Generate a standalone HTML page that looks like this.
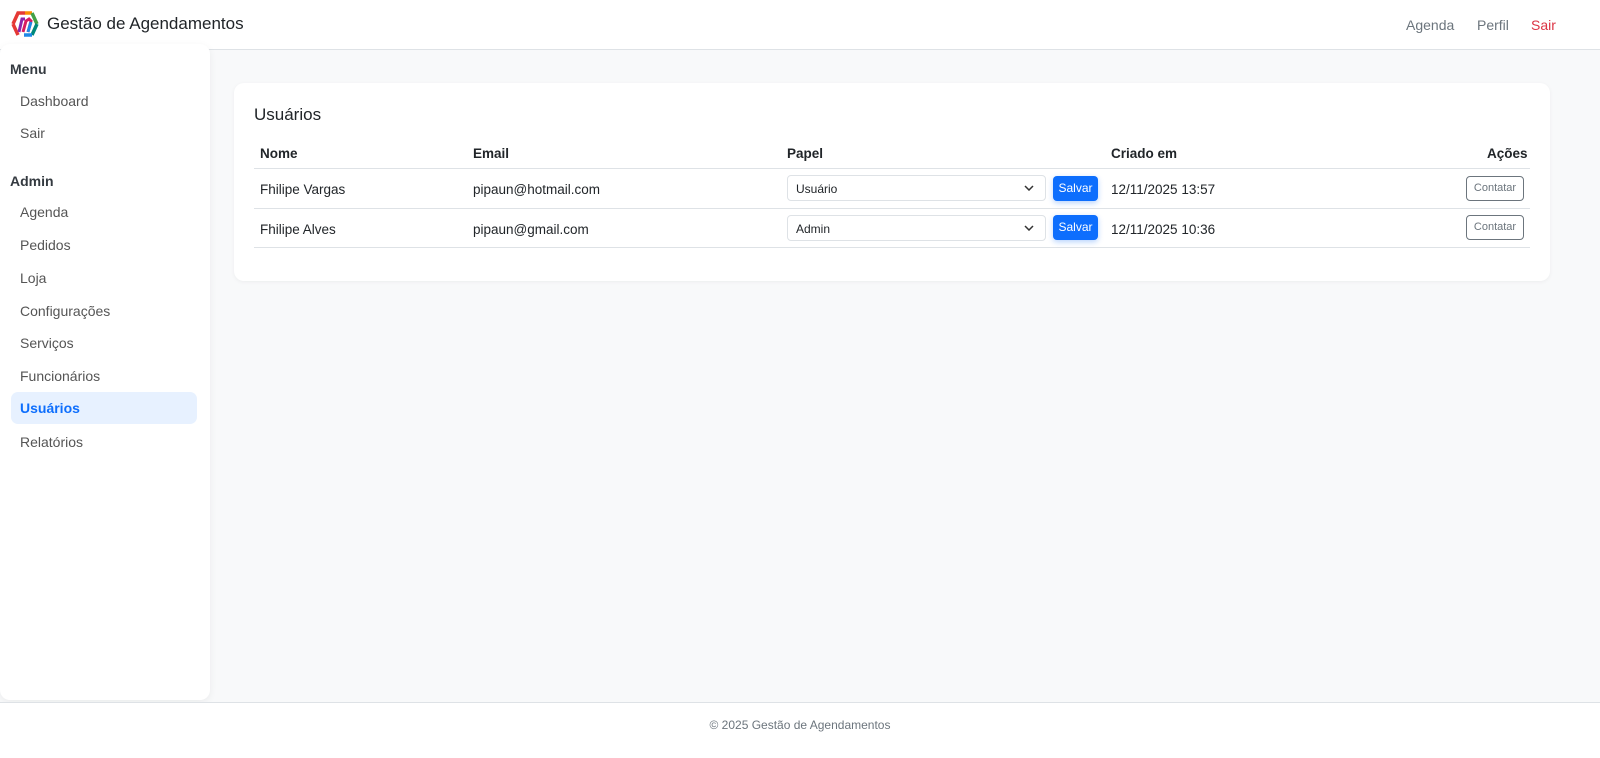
<!DOCTYPE html>
<html><head><meta charset="utf-8"><style>
*{box-sizing:border-box;margin:0;padding:0}
body{width:1600px;height:758px;background:#f8f9fa;font-family:"Liberation Sans",sans-serif;color:#212529;position:relative;overflow:hidden}
.nav{position:absolute;left:0;top:0;width:1600px;height:50px;background:#fff;border-bottom:1px solid #dee2e6}
.brand{position:absolute;left:47px;top:14px;font-size:17px;color:#212529}
.logo{position:absolute;left:10px;top:8px}
.nl{position:absolute;top:17px;font-size:14px;color:#6c757d}
.side{position:absolute;left:0;top:44px;width:210px;height:656px;background:#fff;border-radius:10px;box-shadow:0 2px 8px rgba(0,0,0,.06)}
.side h6{position:absolute;left:10px;font-size:14px;font-weight:bold;color:#343a40}
.side a{position:absolute;left:11px;width:186px;height:32px;padding:8px 9px;font-size:14px;color:#555;border-radius:7px}
.side a.act{background:#e7f1ff;color:#0d6efd;font-weight:bold}
.card{position:absolute;left:234px;top:83px;width:1316px;height:198px;background:#fff;border-radius:10px;box-shadow:0 1px 4px rgba(0,0,0,.05)}
.card h5{position:absolute;left:20px;top:22px;font-size:17px;font-weight:normal}
.th{position:absolute;top:63px;font-size:13.5px;font-weight:bold}
.line{position:absolute;left:20px;width:1276px;height:1px;background:#dee2e6}
.td{position:absolute;font-size:13.5px}
.sel{position:absolute;left:553px;width:259px;height:26px;border:1px solid #dee2e6;border-radius:4px;font-size:12px;padding:6px 8px}
.sel svg{position:absolute;right:11px;top:9px}
.btn{position:absolute;left:819px;width:45px;height:25px;background:#0d6efd;color:#fff;font-size:12px;border-radius:4px;text-align:center;line-height:25px;box-shadow:0 2px 6px rgba(13,110,253,.3)}
.ct{position:absolute;left:1232px;width:58px;height:25px;border:1px solid #6c757d;color:#6c757d;font-size:11px;border-radius:4px;text-align:center;line-height:23px}
.foot{position:absolute;left:0;top:702px;width:1600px;height:56px;background:#fff;border-top:1px solid #dee2e6;text-align:center;font-size:12px;color:#6c757d;padding-top:15px}
</style></head><body>
<div class="nav">
<svg class="logo" width="30" height="32" viewBox="0 0 30 32">
<path d="M3 16 L8 5 L15 5" stroke="#e53935" stroke-width="3.5" fill="none"/>
<path d="M15 5 L22 5" stroke="#fb8c00" stroke-width="3.5" fill="none"/>
<path d="M22 5 L27 16" stroke="#43a047" stroke-width="3.5" fill="none"/>
<path d="M27 16 L22 27" stroke="#00897b" stroke-width="3.5" fill="none"/>
<path d="M22 27 L14 27" stroke="#1e88e5" stroke-width="3.5" fill="none"/>
<path d="M3 16 L8 27" stroke="#e53935" stroke-width="3.5" fill="none"/>
<path d="M9 24 L12 11 L15 11" stroke="#8e24aa" stroke-width="3" fill="none"/>
<path d="M13 24 L16 13 L19 11 L21 13 L18 24" stroke="#d81b60" stroke-width="3" fill="none"/>
<path d="M18 24 L21 14" stroke="#1e88e5" stroke-width="3" fill="none"/>
</svg>
<div class="brand">Gestão de Agendamentos</div>
<div class="nl" style="left:1406px">Agenda</div>
<div class="nl" style="left:1477px">Perfil</div>
<div class="nl" style="left:1531px;color:#dc3545">Sair</div>
</div>
<div class="side">
<h6 style="top:17px">Menu</h6>
<a style="top:41px">Dashboard</a><a style="top:73px">Sair</a>
<h6 style="top:129px">Admin</h6>
<a style="top:152px">Agenda</a><a style="top:185px">Pedidos</a><a style="top:218px">Loja</a><a style="top:251px">Configurações</a><a style="top:283px">Serviços</a><a style="top:316px">Funcionários</a><a class="act" style="top:348px">Usuários</a><a style="top:382px">Relatórios</a>
</div>
<div class="card">
<h5>Usuários</h5>
<div class="th" style="left:26px">Nome</div><div class="th" style="left:239px">Email</div><div class="th" style="left:553px">Papel</div><div class="th" style="left:877px">Criado em</div><div class="th" style="left:1253px">Ações</div>
<div class="line" style="top:85px"></div><div class="line" style="top:125px"></div><div class="line" style="top:164px"></div>
<div class="td" style="left:26px;top:99px">Fhilipe Vargas</div><div class="td" style="left:239px;top:99px">pipaun@hotmail.com</div>
<div class="sel" style="top:92px">Usuário<svg width="10" height="6"><path d="M1 1l4 4 4-4" stroke="#333" stroke-width="1.5" fill="none"/></svg></div>
<div class="btn" style="top:93px">Salvar</div><div class="td" style="left:877px;top:99px">12/11/2025 13:57</div><div class="ct" style="top:93px">Contatar</div>
<div class="td" style="left:26px;top:139px">Fhilipe Alves</div><div class="td" style="left:239px;top:139px">pipaun@gmail.com</div>
<div class="sel" style="top:132px">Admin<svg width="10" height="6"><path d="M1 1l4 4 4-4" stroke="#333" stroke-width="1.5" fill="none"/></svg></div>
<div class="btn" style="top:132px">Salvar</div><div class="td" style="left:877px;top:139px">12/11/2025 10:36</div><div class="ct" style="top:132px">Contatar</div>
</div>
<div class="foot">© 2025 Gestão de Agendamentos</div>
</body></html>
